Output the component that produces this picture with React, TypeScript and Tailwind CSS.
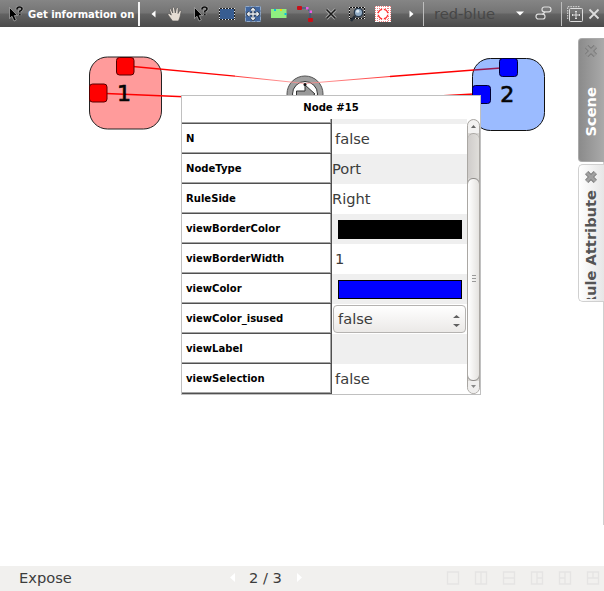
import React from "react";

const ROWS = [
  { name: "N", value: "false", kind: "text" },
  { name: "NodeType", value: "Port", kind: "flush" },
  { name: "RuleSide", value: "Right", kind: "flush" },
  { name: "viewBorderColor", value: "", kind: "black" },
  { name: "viewBorderWidth", value: "1", kind: "text" },
  { name: "viewColor", value: "", kind: "blue" },
  { name: "viewColor_isused", value: "false", kind: "select" },
  { name: "viewLabel", value: "", kind: "text" },
  { name: "viewSelection", value: "false", kind: "text" },
];

function Cell({ children }: { children: React.ReactNode }) {
  return <div className="flex w-[26px] shrink-0 items-center justify-center">{children}</div>;
}

function Pointer() {
  return (
    <svg width="16" height="16" viewBox="0 0 16 16" className="shrink-0">
      <path d="M1.5 1.5 L1.5 12.5 L4 10.3 L6 15 L8.3 14 L6.3 9.6 H9.5 Z" fill="#000" stroke="#b5b5b5" strokeWidth=".7" />
      <path d="M9 3.5 Q9 1 11.5 1 Q14 1 14 3 Q14 4.2 11.8 5.2 V6.5 M11.8 7.7 V9.3" fill="none" stroke="#a4a4a4" strokeWidth="3" />
      <path d="M9 3.5 Q9 1 11.5 1 Q14 1 14 3 Q14 4.2 11.8 5.2 V6.5 M11.8 7.7 V9.3" fill="none" stroke="#111" strokeWidth="1.7" />
    </svg>
  );
}

function Hand() {
  return (
    <svg width="16" height="16" viewBox="0 0 16 16">
      <path d="M5.5 15 L1.5 9.5 Q.3 7.9 1.5 7.5 Q2.7 7.2 4.3 9 L2.5 3.8 Q2.3 2.3 3.7 2.6 L5.8 7 L5.4 1.8 Q6.4 .5 7.4 1.8 L8.3 7 L9.4 2 Q10.6 .8 11.2 2.3 L11 7.5 L12.8 4.4 Q14.4 3.8 14.2 5.5 L13 11 L11.5 15 Z" fill="#e5ddd4" stroke="#555" strokeWidth=".7" />
    </svg>
  );
}

function Cross({ light = false }: { light?: boolean }) {
  return (
    <svg width="12" height="12" viewBox="0 0 12 12">
      {!light && <path d="M1.5 1.5 L10.5 10.5 M10.5 1.5 L1.5 10.5" stroke="#aaa" strokeWidth="3.2" />}
      <path d="M1.5 1.5 L10.5 10.5 M10.5 1.5 L1.5 10.5" stroke={light ? "#ddd" : "#1b1b1b"} strokeWidth={light ? "1.8" : "1.5"} />
    </svg>
  );
}

function Toolbar() {
  return (
    <div className="flex h-[27px] shrink-0 items-center bg-[linear-gradient(#858585_0%,#747474_48%,#626262_52%,#4b4b4b_100%)] text-white">
      <div className="flex w-[138px] shrink-0 items-center pl-2">
        <Pointer />
        <span className="ml-1 whitespace-nowrap pt-px text-[10px] font-bold tracking-[-0.03px]">Get information on</span>
      </div>
      <div className="h-[24px] w-[2px] shrink-0 bg-[#f4f4f4]" />
      <div className="flex w-[22px] shrink-0 items-center justify-center pl-1">
        <svg width="5" height="8" viewBox="0 0 5 8"><path d="M4.5 .5 V7.5 L.5 4 Z" fill="#fff" /></svg>
      </div>
      <Cell><Hand /></Cell>
      <Cell><Pointer /></Cell>
      <Cell>
        <svg width="16" height="16" viewBox="0 0 16 16" shapeRendering="crispEdges">
          <rect x="1" y="3" width="14" height="11" fill="#385d91" />
          <path d="M0 2.5 H16 M0 13.5 H16 M.5 2 V14 M15.5 2 V14" stroke="#222" />
          <path d="M0 2.5 H16 M0 13.5 H16 M.5 2 V14 M15.5 2 V14" stroke="#dfe2e6" strokeDasharray="1 2" />
        </svg>
      </Cell>
      <Cell>
        <svg width="16" height="16" viewBox="0 0 16 16">
          <rect x=".5" y=".5" width="15" height="15" fill="#4167a0" stroke="#8fa8c8" strokeDasharray="4 1" />
          <path d="M8 2.5 V13.5 M2.5 8 H13.5 M6 4.5 L8 2.5 L10 4.5 M6 11.5 L8 13.5 L10 11.5 M4.5 6 L2.5 8 L4.5 10 M11.5 6 L13.5 8 L11.5 10" fill="none" stroke="#303846" strokeWidth="2.8" />
          <path d="M8 2.5 V13.5 M2.5 8 H13.5 M6 4.5 L8 2.5 L10 4.5 M6 11.5 L8 13.5 L10 11.5 M4.5 6 L2.5 8 L4.5 10 M11.5 6 L13.5 8 L11.5 10" fill="none" stroke="#e8edf2" strokeWidth="1.3" />
        </svg>
      </Cell>
      <Cell>
        <svg width="16" height="16" viewBox="0 0 16 16">
          <rect x="0" y="3" width="15.5" height="9" fill="#8fef80" />
          <path d="M3 3 H5 V5 H3 Z M13.5 7 H15.5 V9 H13.5 Z" fill="#08bde2" /><path d="M9 3 H11 V5 H9 Z" fill="#f4d20a" />
        </svg>
      </Cell>
      <Cell>
        <svg width="16" height="16" viewBox="0 0 16 16">
          <path d="M2 2 L10 2 L13 6 L13 13" fill="none" stroke="#30508a" />
          <rect y="0" width="5" height="4" rx="1" fill="#c90f18" /><rect x="11" y="12" width="5" height="4" rx="1" fill="#c90f18" />
          <path d="M9 1 H11.5 V3.5 H9 Z M12.5 4.5 H15 V7 H12.5 Z" fill="#ed5be5" />
        </svg>
      </Cell>
      <Cell><Cross /></Cell>
      <Cell>
        <svg width="16" height="16" viewBox="0 0 16 16">
          <g shapeRendering="crispEdges">
            <path d="M0 1.5 H16 M0 12.5 H16 M.5 1 V13 M15.5 1 V13" stroke="#111" />
            <path d="M0 1.5 H16 M0 12.5 H16 M.5 1 V13 M15.5 1 V13" stroke="#e5e5e5" strokeDasharray="1 2" />
          </g>
          <path d="M6 10 L2 15" stroke="#252e39" strokeWidth="2.5" />
          <circle cx="9.5" cy="6.5" r="4.2" fill="#92acc5" stroke="#29394b" strokeWidth="1.3" /><circle cx="8.7" cy="5.2" r="1.6" fill="#dce9f2" />
        </svg>
      </Cell>
      <Cell>
        <svg width="16" height="16" viewBox="0 0 16 16">
          <rect width="16" height="16" fill="#fff" />
          <path d="M.5 0 V16 M2.5 0 V16 M13.5 0 V16 M15.5 0 V16" stroke="#f08080" strokeDasharray="1 1" />
          <path d="M4 .5 H13 M4 2.5 H13 M4 13.5 H13 M4 15.5 H13" stroke="#f08080" strokeDasharray="1 1" />
          <circle cx="8" cy="8" r="4.8" fill="#fff" stroke="#f33" strokeWidth="1.4" />
          <path d="M8 2 V5 M8 11 V14 M2 8 H5 M11 8 H14" stroke="#fff" strokeWidth="1.6" />
        </svg>
      </Cell>
      <div className="flex w-[27px] shrink-0 items-center justify-center pl-1">
        <svg width="5" height="8" viewBox="0 0 5 8"><path d="M.5 .5 V7.5 L4.5 4 Z" fill="#fff" /></svg>
      </div>
      <div className="h-[24px] w-px shrink-0 bg-[#bdbdbd]" />
      <div className="w-[92px] shrink-0 whitespace-nowrap pl-[10px] text-[14.67px] leading-[27px] text-[#474747]">red-blue</div>
      <svg width="8" height="5" viewBox="0 0 8 5" className="shrink-0"><path d="M0 .5 H8 L4 4.5 Z" fill="#fff" /></svg>
      <svg width="17" height="16" viewBox="0 0 17 16" className="ml-[11px] shrink-0">
        <g fill="none" stroke="#ddd" strokeWidth="1.2"><rect x="7" y="1" width="9" height="4.8" rx="2.3" /><rect x="1" y="8.2" width="9" height="4.8" rx="2.3" /><path d="M10 6 L7.5 8.5" /></g>
      </svg>
      <div className="ml-[9px] h-[24px] w-px shrink-0 bg-[#bdbdbd]" />
      <svg width="16" height="16" viewBox="0 0 16 16" className="ml-[5px] shrink-0">
        <rect x="2.5" y="2.5" width="13" height="13" rx="1" fill="none" stroke="#ddd" />
        <path d="M.7 13 V.7 H13" fill="none" stroke="#ddd" strokeDasharray="1.5 1" />
        <path d="M9 5 V13 M5 9 H13 M8 5.5 H10 M8 12.5 H10 M5.5 8 V10 M12.5 8 V10" stroke="#ddd" />
      </svg>
      <div className="ml-[5px] flex shrink-0"><Cross light /></div>
    </div>
  );
}

function Graph() {
  return (
    <svg width="578" height="539" viewBox="0 27 578 539" className="block shrink-0">
      <defs>
        <linearGradient id="edgeLeft"><stop stopColor="#ff0000" /><stop offset=".5" stopColor="#ff6060" /><stop offset="1" stopColor="#ffa2a2" /></linearGradient>
        <linearGradient id="edgeRight"><stop stopColor="#ff9a9a" /><stop offset=".6" stopColor="#ff4040" /><stop offset="1" stopColor="#ff0000" /></linearGradient>
      </defs>
      <rect x="89.5" y="57" width="72" height="72" rx="18" fill="#ff9b9b" stroke="#222" />
      <rect x="472.5" y="58.5" width="72" height="72" rx="18" fill="#9bbbff" stroke="#111" />
      <circle cx="305" cy="94" r="18" fill="#a0a0a0" stroke="#555" />
      <circle cx="305" cy="94" r="12.5" fill="#fff" stroke="#333" />
      <path d="M296.5 91 H305 V85 L315 94 L305 102 V97 H296.5 Z" fill="#999" stroke="#333" />
      <path d="M133 66.5 L235 76.2" stroke="#ff0000" strokeWidth="1.3" />
      <path d="M235 76.2 L305 83.5" stroke="url(#edgeLeft)" strokeWidth=".8" />
      <path d="M305 83.5 L390 76.5" stroke="url(#edgeRight)" strokeWidth=".8" />
      <path d="M390 76.5 L474 70" stroke="#ff0000" strokeWidth="1.3" />
      <path d="M474 70 L501 68" stroke="#9b194f" strokeWidth="1.4" />
      <path d="M106 93.5 L190 97 M430 96.5 L474 94" stroke="#ff0000" strokeWidth="1.3" />
      <circle cx="305" cy="84.5" r="1.5" fill="#111" />
      <g fill="#ff0000" stroke="#500" strokeWidth="1"><rect x="116.5" y="57.5" width="17.5" height="17.5" rx="3" /><rect x="89.5" y="84" width="17.5" height="18" rx="3" /></g>
      <g fill="#0000ff" stroke="#003" strokeWidth="1"><rect x="499.5" y="58.5" width="18" height="18" rx="3" /><rect x="472.5" y="85.5" width="18" height="18" rx="3" /></g>
      <g fill="#050505" stroke="#050505" strokeWidth=".7" fontSize="22" fontFamily="DejaVu Sans" textAnchor="middle"><text x="124" y="101">1</text><text x="507.3" y="102">2</text></g>
    </svg>
  );
}

function TabClose({ color }: { color: string }) {
  return (
    <svg width="14" height="14" viewBox="0 0 13 13" className="shrink-0">
      <path d="M2.5 2.5 L10.5 10.5 M10.5 2.5 L2.5 10.5" stroke="#777" strokeWidth="4.3" /><path d="M2.5 2.5 L10.5 10.5 M10.5 2.5 L2.5 10.5" stroke={color} strokeWidth="2.8" />
    </svg>
  );
}

function SideTabs() {
  return (
    <div className="flex w-[26px] flex-col pt-[11px]">
      <div className="flex h-[487px] flex-col border-r border-[#d0d0d0]">
        <div className="flex h-[124px] w-[26px] shrink-0 flex-col items-center rounded-l-[4px] border border-r-0 border-[#aaa] bg-[linear-gradient(90deg,#8b8b8b,#aaa)] pr-[2px] pt-[5px]">
          <TabClose color="#979797" />
          <span className="mt-[29px] rotate-180 [writing-mode:vertical-rl] text-[14.67px] leading-[20px] font-bold text-white">Scene</span>
        </div>
        <div className="mt-[2px] flex h-[138px] w-[26px] shrink-0 flex-col items-center rounded-l-[5px] border border-r-0 border-[#d0d0d0] bg-[linear-gradient(90deg,#fff,#e6e6e6)] pr-[2px] pt-[5px]">
          <TabClose color="#a0a0a0" />
          <div className="mt-[6px] h-[109px] overflow-hidden">
            <span className="block rotate-180 whitespace-nowrap [writing-mode:vertical-rl] text-[14.67px] leading-[20px] font-bold text-[#555]">Rule Attribute</span>
          </div>
        </div>
      </div>
    </div>
  );
}

function Value({ kind, value }: { kind: string; value: string }) {
  if (kind === "black") return <div className="ml-[6px] mt-px h-[19px] w-[124px] bg-black" />;
  if (kind === "blue") return <div className="ml-[6px] mt-px h-[19px] w-[124px] border border-black bg-[#0000ff]" />;
  if (kind === "select")
    return (
      <div className="ml-px flex h-[28px] w-[133px] items-center justify-between rounded-[4px] border border-[#b5b3b1] bg-[linear-gradient(#fff,#ebe9e7)] pl-[4px] pr-[5px]">
        <span>{value}</span>
        <svg width="7" height="14" viewBox="0 0 7 14" className="mt-[4px]"><path d="M0 4 H7 L3.5 1 Z M0 10 H7 L3.5 13 Z" fill="#606060" /></svg>
      </div>
    );
  return <span className={kind === "flush" ? "-mt-px" : "-mt-px pl-[3px]"}>{value}</span>;
}

function Scrollbar() {
  return (
    <div className="flex h-[275px] w-[13px] flex-col overflow-hidden rounded-[7px] border border-[#aaa7a3] bg-[#d9d7d4]">
      <div className="flex h-[13px] shrink-0 items-center justify-center rounded-t-[6px] bg-[#f3f2f1]"><svg width="5" height="3" viewBox="0 0 5 3"><path d="M0 3 H5 L2.5 0 Z" fill="#666" /></svg></div>
      <div className="h-[45px] shrink-0 rounded-t-[6px] border-t border-[#aaa7a3] bg-[linear-gradient(90deg,#cfccca,#e0deda)]" />
      <div className="-mx-px flex h-[203px] shrink-0 items-center justify-center rounded-[6px] border border-[#8e8b88] bg-[linear-gradient(90deg,#fff,#e4e2df)] pb-[3px]">
        <svg width="4" height="8" viewBox="0 0 4 8"><path d="M0 1.5 H4 M0 4.5 H4 M0 7.5 H4" stroke="#999" /></svg>
      </div>
      <div className="flex flex-1 items-center justify-center bg-[#f0efee] pb-px"><svg width="5" height="3" viewBox="0 0 5 3"><path d="M0 0 H5 L2.5 3 Z" fill="#888" /></svg></div>
    </div>
  );
}

function Properties() {
  return (
    <div className="absolute left-[181px] top-[95px] flex h-[300px] w-[300px] flex-col border border-[#c0c0c0] bg-white">
      <div className="flex h-[23px] shrink-0 items-center justify-center pt-px text-[10.1px] font-bold text-black">Node #15</div>
      <div className="flex h-[275px]">
        <div className="w-[285px]">
          <div className="flex h-[5px]">
            <div className="w-[150px] border-b border-r border-[#555] shadow-[inset_-1px_-1px_#a5a5a5]" />
            <div className="flex-1 bg-[#efefef]" />
          </div>
          {ROWS.map((row, i) => (
            <div key={row.name} className="flex h-[30px]">
              <div className="flex w-[150px] shrink-0 items-center border-b border-r border-[#505050] pl-1 text-[10.05px] font-bold text-black shadow-[inset_-1px_-1px_#a5a5a5]">{row.name}</div>
              <div className={`flex flex-1 items-center text-[14.67px] leading-5 text-[#3c3c3c] ${i % 2 ? "bg-[#efefef]" : "bg-white"}`}><Value kind={row.kind} value={row.value} /></div>
            </div>
          ))}
        </div>
        <Scrollbar />
      </div>
    </div>
  );
}

const PANES = ["", "M7 1 V13", "M1 7 H13", "M7 1 V13 M7 7 H13", "M7 1 V13 M1 7 H7", "M1 7 H13 M7 1 V7"];

function Status() {
  return (
    <div className="flex h-[25px] shrink-0 items-center bg-[#f1f0ee] pb-[2px] pl-[19px] text-[14.67px] leading-[22px] text-[#3c3c3c]">
      <span className="w-[210px]">Expose</span>
      <svg width="7" height="9" viewBox="0 0 7 9"><path d="M6 0 V9 L1 4.5 Z" fill="#fff" /></svg>
      <span className="w-[60px] whitespace-nowrap pl-[13px]">2 / 3</span>
      <svg width="7" height="9" viewBox="0 0 7 9"><path d="M1 0 V9 L6 4.5 Z" fill="#fff" /></svg>
      <div className="ml-[143px] flex gap-[14px]">
        {PANES.map((d, i) => <svg key={i} width="14" height="14" viewBox="0 0 14 14"><path d={`M1.5 1 H12.5 V13 H1.5 Z ${d}`} fill="none" stroke="#e5e4e3" strokeWidth="1.3" /></svg>)}
      </div>
    </div>
  );
}

export default function App() {
  return (
    <div className="relative flex h-[591px] w-[604px] flex-col overflow-hidden bg-white font-['DejaVu_Sans',sans-serif]">
      <Toolbar />
      <div className="flex h-[539px] shrink-0"><Graph /><SideTabs /></div>
      <Status />
      <Properties />
    </div>
  );
}
